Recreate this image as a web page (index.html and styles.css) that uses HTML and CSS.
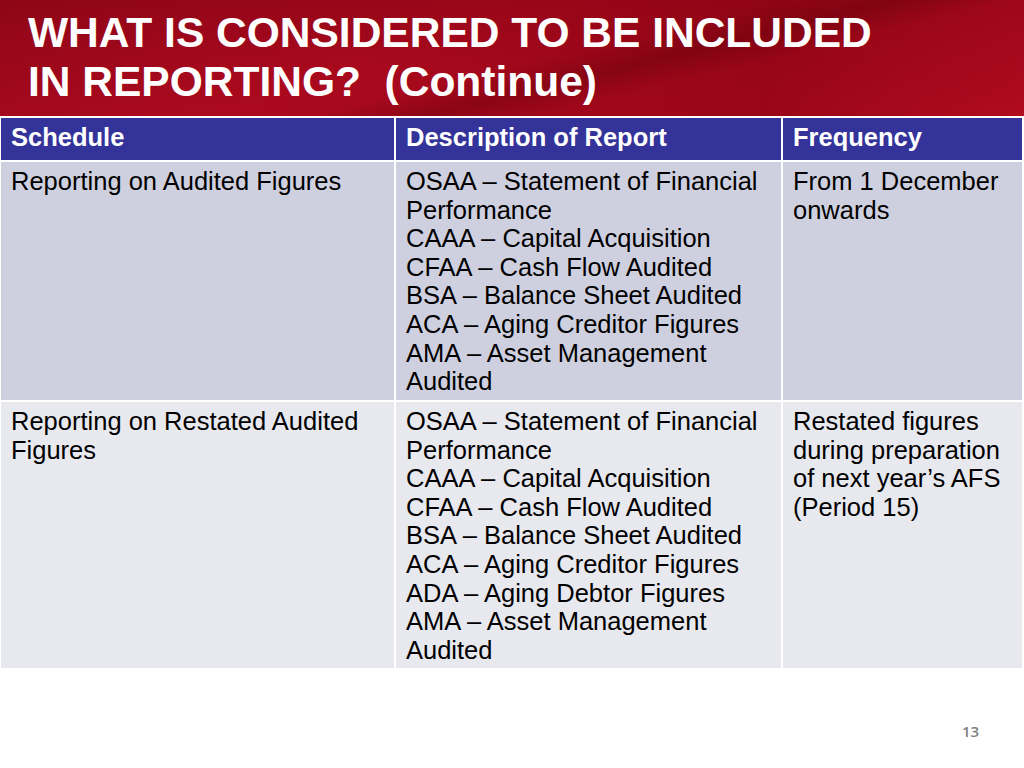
FILE: index.html
```html
<!DOCTYPE html>
<html>
<head>
<meta charset="utf-8">
<link rel="stylesheet" href="styles.css">
</head>
<body>
<div class="slide">
  <header class="banner">
    <h1 class="title">WHAT IS CONSIDERED TO BE INCLUDED<br>IN REPORTING?&nbsp; (Continue)</h1>
  </header>
  <div class="table">
    <div class="cell head">Schedule</div>
    <div class="cell head">Description of Report</div>
    <div class="cell head">Frequency</div>

    <div class="cell odd">Reporting on Audited Figures</div>
    <div class="cell odd">OSAA – Statement of Financial Performance<br>CAAA – Capital Acquisition<br>CFAA – Cash Flow Audited<br>BSA – Balance Sheet Audited<br>ACA – Aging Creditor Figures<br>AMA – Asset Management Audited</div>
    <div class="cell odd">From 1 December onwards</div>

    <div class="cell even">Reporting on Restated Audited Figures</div>
    <div class="cell even">OSAA – Statement of Financial Performance<br>CAAA – Capital Acquisition<br>CFAA – Cash Flow Audited<br>BSA – Balance Sheet Audited<br>ACA – Aging Creditor Figures<br>ADA – Aging Debtor Figures<br>AMA – Asset Management Audited</div>
    <div class="cell even">Restated figures during preparation of next year’s AFS (Period 15)</div>
  </div>
  <div class="page-num">13</div>
</div>
</body>
</html>
```

FILE: styles.css
```css
html, body {
  margin: 0;
  padding: 0;
  background: #ffffff;
}
.slide {
  position: relative;
  width: 1024px;
  height: 768px;
  overflow: hidden;
  font-family: "Liberation Sans", Arial, sans-serif;
}
.banner {
  height: 116px;
  background:
    linear-gradient(166deg, rgba(0,0,0,0) 0%, rgba(0,0,0,0) 52%, rgba(90,0,10,0.35) 60%, rgba(0,0,0,0) 68%),
    linear-gradient(160deg, rgba(110,0,15,0.5) 0%, rgba(110,0,15,0.0) 40%),
    linear-gradient(185deg, rgba(120,0,15,0.35) 0%, rgba(120,0,15,0) 60%),
    linear-gradient(90deg, #b20b20 0%, #a5081c 45%, #9a0618 75%, #b20b1f 100%);
  padding: 8px 0 0 28px;
  box-sizing: border-box;
}
.title {
  margin: 0;
  color: #ffffff;
  font-weight: bold;
  font-size: 42.5px;
  line-height: 49px;
  letter-spacing: 0;
}
.table {
  display: grid;
  grid-template-columns: 393px 385px 239px;
  grid-template-rows: 42px 238px 266px;
  gap: 2px;
  padding: 2px 1px 0 1px;
}
.cell {
  font-size: 25.5px;
  line-height: 28.6px;
  padding: 5px 10px 4px 10px;
  color: #000000;
}
.head {
  background: #333399;
  color: #ffffff;
  font-weight: bold;
  padding-top: 5px;
}
.odd {
  background: #cfd0df;
}
.even {
  background: #e8e8ef;
}
.page-num {
  position: absolute;
  left: 962px;
  top: 721px;
  font-family: "Open Sans", "DejaVu Sans", sans-serif;
  font-size: 15px;
  font-weight: 600;
  color: #7f7f7f;
}
```
